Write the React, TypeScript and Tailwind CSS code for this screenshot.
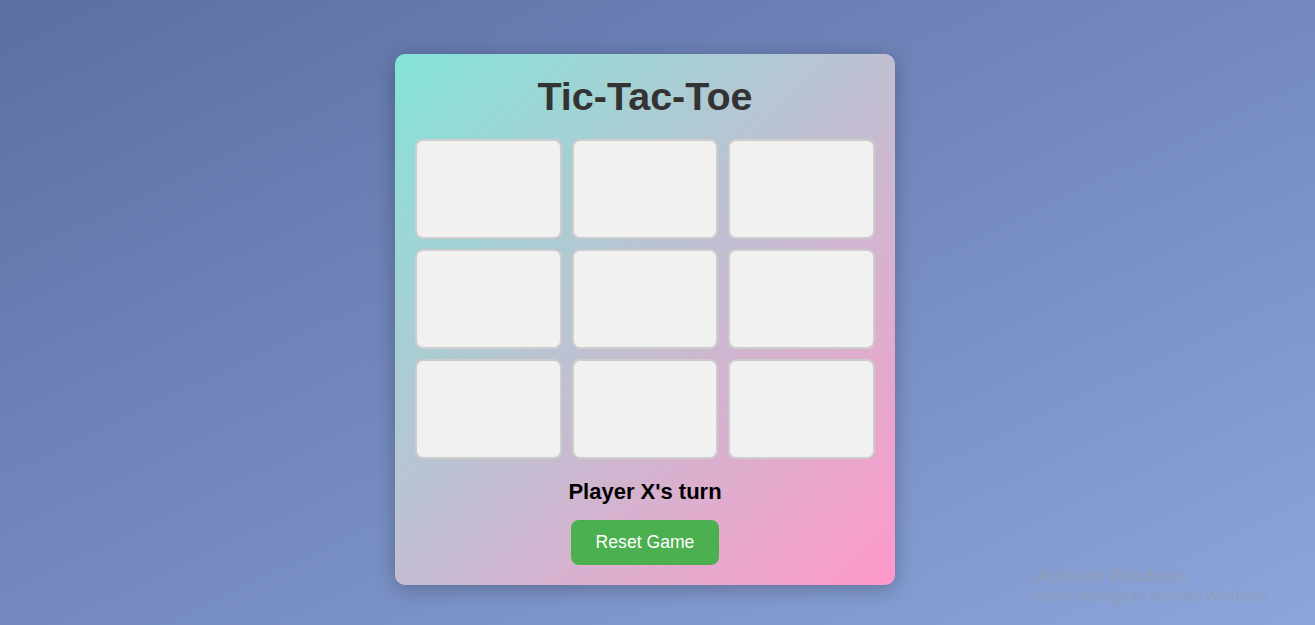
import { useState } from "react"

type Cell = "X" | "O" | null

export default function App() {
  const [board, setBoard] = useState<Cell[]>(Array(9).fill(null))
  const [turn, setTurn] = useState<"X" | "O">("X")

  function play(i: number) {
    if (board[i]) return
    const next = [...board]
    next[i] = turn
    setBoard(next)
    setTurn(turn === "X" ? "O" : "X")
  }

  function reset() {
    setBoard(Array(9).fill(null))
    setTurn("X")
  }

  return (
    <div className="relative min-h-screen w-full overflow-hidden bg-[linear-gradient(to_bottom_right,#5c6fa3,#8ca5da)] font-['Liberation_Sans',Arial,sans-serif]">
      <div className="flex justify-center pt-[54px] pr-[25px]">
        {/* Card */}
        <div className="w-[500px] rounded-[10px] bg-[linear-gradient(135deg,#84e4d7,#ff99cb)] p-5 flex flex-col items-center shadow-[0_4px_20px_rgba(0,0,0,0.25)]">
          <h1 className="text-[39.5px] leading-[44px] font-bold text-[#333] mb-[21px]">Tic-Tac-Toe</h1>

          <div className="grid grid-cols-3 gap-[10px] w-full">
            {board.map((c, i) => (
              <button
                key={i}
                onClick={() => play(i)}
                className="h-[100px] rounded-[8px] border-2 border-[#cdcdcd] bg-[#f1f1f1] text-5xl font-bold text-[#333]"
              >
                {c}
              </button>
            ))}
          </div>

          <p className="mt-5 text-[22px] leading-[25px] font-bold text-black">Player {turn}'s turn</p>

          <button
            onClick={reset}
            className="mt-4 h-[45px] px-[25px] rounded-[8px] bg-[#4caf50] text-white text-[17.6px]"
          >
            Reset Game
          </button>
        </div>
      </div>

      {/* Windows watermark */}
      <div className="absolute left-[1036px] top-[564px] text-[#939cb6] font-['Open_Sans','Noto_Sans',sans-serif] pointer-events-none">
        <div className="text-[18.5px] leading-[22px]">Activate Windows</div>
        <div className="text-[14.3px] leading-[20px]">Go to Settings to activate Windows.</div>
      </div>
    </div>
  )
}
